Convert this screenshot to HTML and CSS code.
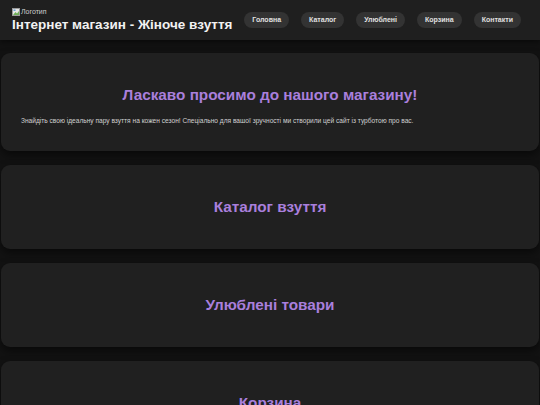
FILE: index.html
```html
<!DOCTYPE html>
<html lang="uk">
<head>
    <meta charset="UTF-8">
    <meta name="viewport" content="width=device-width, initial-scale=1.0">
    <title>Інтернет магазин - Жіноче взуття</title>
    <link rel="stylesheet" href="styles.css">
</head>
<body>
    <header class="site-header">
        <div class="brand">
            <!-- logo placeholder -->
            <span class="logo">
                <svg class="logo-icon" width="8" height="8" viewBox="0 0 8 8">
                    <rect x="0.5" y="0.5" width="7" height="7" fill="#e8e8e8" stroke="#9a9a9a"/>
                    <path d="M1 7 L3.5 4 L5 5.5 L7 3 L7 7 Z" fill="#6fae5a"/>
                    <rect x="1.5" y="1.5" width="2" height="1.5" fill="#6a9fd8"/>
                </svg>Логотип
            </span>
            <h1>Інтернет магазин - Жіноче взуття</h1>
        </div>
        <nav class="main-nav">
            <a href="#">Головна</a>
            <a href="#catalog">Каталог</a>
            <a href="#favorites">Улюблені</a>
            <a href="#cart">Корзина</a>
            <a href="#contacts">Контакти</a>
        </nav>
    </header>

    <main>
        <section class="block">
            <h2>Ласкаво просимо до нашого магазину!</h2>
            <p>Знайдіть свою ідеальну пару взуття на кожен сезон! Спеціально для вашої зручності ми створили цей сайт із турботою про вас.</p>
        </section>

        <section class="block" id="catalog">
            <h2>Каталог взуття</h2>
        </section>

        <section class="block" id="favorites">
            <h2>Улюблені товари</h2>
        </section>

        <section class="block" id="cart">
            <h2>Корзина</h2>
        </section>

        <section class="block" id="contacts">
            <h2>Контакти</h2>
        </section>
    </main>
</body>
</html>
```

FILE: styles.css
```css
body {
    margin: 0;
    background-color: #121212;
    color: #e6e6e6;
    font-family: "Liberation Sans", Arial, sans-serif;
}

.site-header {
    height: 40px;
    display: flex;
    align-items: center;
    justify-content: space-between;
    padding: 0 19px 0 12px;
    background-color: #1f1f1f;
    box-shadow: 0 2px 6px rgba(0, 0, 0, 0.5);
    white-space: nowrap;
}

.brand {
    display: flex;
    flex-direction: column;
    flex-shrink: 0;
}

.logo {
    display: flex;
    align-items: center;
    font-size: 7px;
    line-height: 8px;
    color: #cfcfcf;
}

.logo-icon {
    margin-right: 1px;
}

.site-header h1 {
    margin: 0;
    font-size: 13.5px;
    line-height: 17px;
    color: #f2f2f2;
}

.main-nav {
    display: flex;
    gap: 12px;
}

.main-nav a {
    padding: 4px 8px;
    border-radius: 8px;
    background-color: #333333;
    color: #e0e0e0;
    font-size: 7px;
    font-weight: bold;
    line-height: 8px;
    text-decoration: none;
}

main {
    padding-top: 13px;
}

.block {
    margin: 0 1px 14px;
    padding: 20px;
    background-color: #202020;
    border-radius: 9px;
    box-shadow: 0 4px 8px rgba(0, 0, 0, 0.5);
    text-align: center;
}

.block h2 {
    margin: 13px 0;
    font-size: 15.3px;
    line-height: 18px;
    color: #a97fdc;
}

.block p {
    margin: 7px 0;
    font-size: 6.6px;
    text-align: left;
    color: #d0d0d0;
}
```
